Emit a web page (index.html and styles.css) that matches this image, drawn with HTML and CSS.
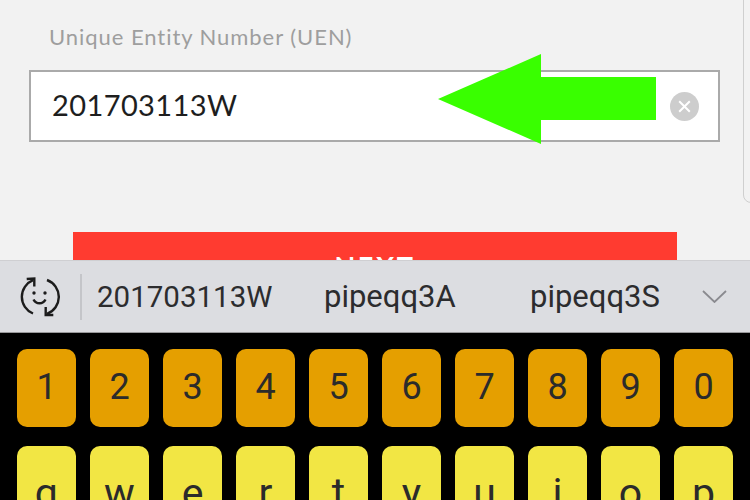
FILE: index.html
```html
<!DOCTYPE html>
<html lang="en">
<head>
  <meta charset="UTF-8" />
  <meta name="viewport" content="width=device-width, initial-scale=1.0" />
  <title>Unique Entity Number</title>
  <link rel="stylesheet" href="styles.css">
</head>
<body>

<div class="screen">
  <div class="form">
    <div class="side-panel"></div>
    <div class="label">Unique Entity Number (UEN)</div>
    <div class="field">
      <span class="field-value">201703113W</span>
      <span class="clear">
        <svg width="29" height="29" viewBox="0 0 29 29">
          <circle cx="14.5" cy="14.5" r="14.5" fill="#cdcdcd" />
          <path d="M9.2 9.2L19.8 19.8M19.8 9.2L9.2 19.8" stroke="#fff" stroke-width="2" fill="none" />
        </svg>
      </span>
    </div>
    <div class="next">NEXT</div>
    <svg class="arrow" width="220" height="92" viewBox="0 0 220 92">
      <polygon points="0,45 103,0 103,23 218,23 218,66 103,66 103,90" fill="#39ff00" />
    </svg>
  </div>

  <div class="suggest">
    <svg class="suggest-icon" width="40" height="40" viewBox="0 0 40 40" fill="none" stroke="#1c1c1c" stroke-width="2.4">
      <path d="M13 36.5A18 18 0 0 1 13 3.2" />
      <path d="M6.7 2L14.3 1.5L14.3 9.5" />
      <path d="M27 3A18 18 0 0 1 27 36.8" />
      <path d="M33.3 38L25.7 38L25.7 30" />
      <circle cx="14" cy="16" r="1.7" fill="#1c1c1c" stroke="none" />
      <circle cx="25" cy="16" r="1.7" fill="#1c1c1c" stroke="none" />
      <path d="M13.5 22.5C16 27.5 23 27.5 25.5 22.5" />
    </svg>
    <div class="suggest-sep"></div>
    <div class="word word-first">201703113W</div>
    <div class="word word-second">pipeqq3A</div>
    <div class="word word-third">pipeqq3S</div>
    <svg class="chevron" width="25" height="13" viewBox="0 0 25 13" fill="none" stroke="#8a8a8f" stroke-width="1.8">
      <path d="M1 1L12.5 12L24 1" />
    </svg>
  </div>

  <div class="keyboard">
    <div class="key-row">
      <div class="key num">1</div>
      <div class="key num">2</div>
      <div class="key num">3</div>
      <div class="key num">4</div>
      <div class="key num">5</div>
      <div class="key num">6</div>
      <div class="key num">7</div>
      <div class="key num">8</div>
      <div class="key num">9</div>
      <div class="key num">0</div>
    </div>
    <div class="key-row">
      <div class="key letter">q</div>
      <div class="key letter">w</div>
      <div class="key letter">e</div>
      <div class="key letter">r</div>
      <div class="key letter">t</div>
      <div class="key letter">y</div>
      <div class="key letter">u</div>
      <div class="key letter">i</div>
      <div class="key letter">o</div>
      <div class="key letter">p</div>
    </div>
  </div>
</div>

</body>
</html>
```

FILE: styles.css
```css
html, body {
  margin: 0;
  padding: 0;
  background-color: #000;
}

.screen {
  width: 750px;
  height: 500px;
  overflow: hidden;
  display: flex;
  flex-direction: column;
}

.form {
  position: relative;
  flex: 0 0 260px;
  overflow: hidden;
  box-sizing: border-box;
  padding: 24px 30px 0 29px;
  background-color: #f2f2f2;
  font-family: "Lato", sans-serif;
}

.side-panel {
  position: absolute;
  left: 743px;
  top: -20px;
  width: 40px;
  height: 223px;
  box-sizing: border-box;
  border: 1px solid #cfcfcf;
  border-radius: 8px;
}

.label {
  margin-left: 20px;
  height: 26px;
  line-height: 26px;
  font-size: 22px;
  letter-spacing: 0.95px;
  color: #9e9e9e;
}

.field {
  display: flex;
  align-items: center;
  justify-content: space-between;
  box-sizing: border-box;
  height: 72px;
  margin-top: 20px;
  padding: 0 19px 0 21px;
  background-color: #fff;
  border: 2px solid #aaa;
}

.field-value {
  margin-top: -3px;
  font-size: 29px;
  letter-spacing: 0.4px;
  color: #1e1e1e;
}

.clear {
  display: flex;
  margin-top: 1px;
}

.next {
  height: 80px;
  margin: 90px 43px 0 44px;
  padding-top: 17px;
  box-sizing: border-box;
  text-align: center;
  background-color: #ff3b30;
  color: #fff;
  font-size: 27px;
  font-weight: 700;
  letter-spacing: 2.6px;
}

.arrow {
  position: absolute;
  left: 438px;
  top: 54px;
}

.suggest {
  flex: 0 0 73px;
  display: flex;
  align-items: center;
  box-sizing: border-box;
  padding: 0 23px 0 20px;
  background-color: #dcdde1;
  border-top: 1px solid #cfcfd2;
  border-bottom: 1px solid #98989a;
  font-family: "Roboto", sans-serif;
  font-size: 29.5px;
  color: #2c2c2e;
}

.suggest-icon {
  flex: none;
}

.suggest-sep {
  flex: none;
  width: 2px;
  height: 46px;
  margin: 0 15px 0 20px;
  background-color: #c4c5c9;
}

.word {
  flex: none;
}

.word-first {
  width: 227px;
}

.word-second {
  width: 206px;
  font-size: 31px;
}

.word-third {
  flex: 1;
  font-size: 31px;
}

.keyboard {
  flex: 1;
  display: flex;
  flex-direction: column;
  gap: 19px;
  padding: 16px 17px 0;
  font-family: "Roboto", sans-serif;
  color: #2b2b2b;
}

.key-row {
  display: flex;
  justify-content: space-between;
}

.key {
  flex: 0 0 59px;
  height: 78px;
  box-sizing: border-box;
  border-radius: 10px;
  text-align: center;
}

.num {
  background-color: #e59f00;
  font-size: 36px;
  line-height: 76px;
}

.letter {
  background-color: #f2e644;
  font-size: 41px;
  line-height: 94px;
}
```
